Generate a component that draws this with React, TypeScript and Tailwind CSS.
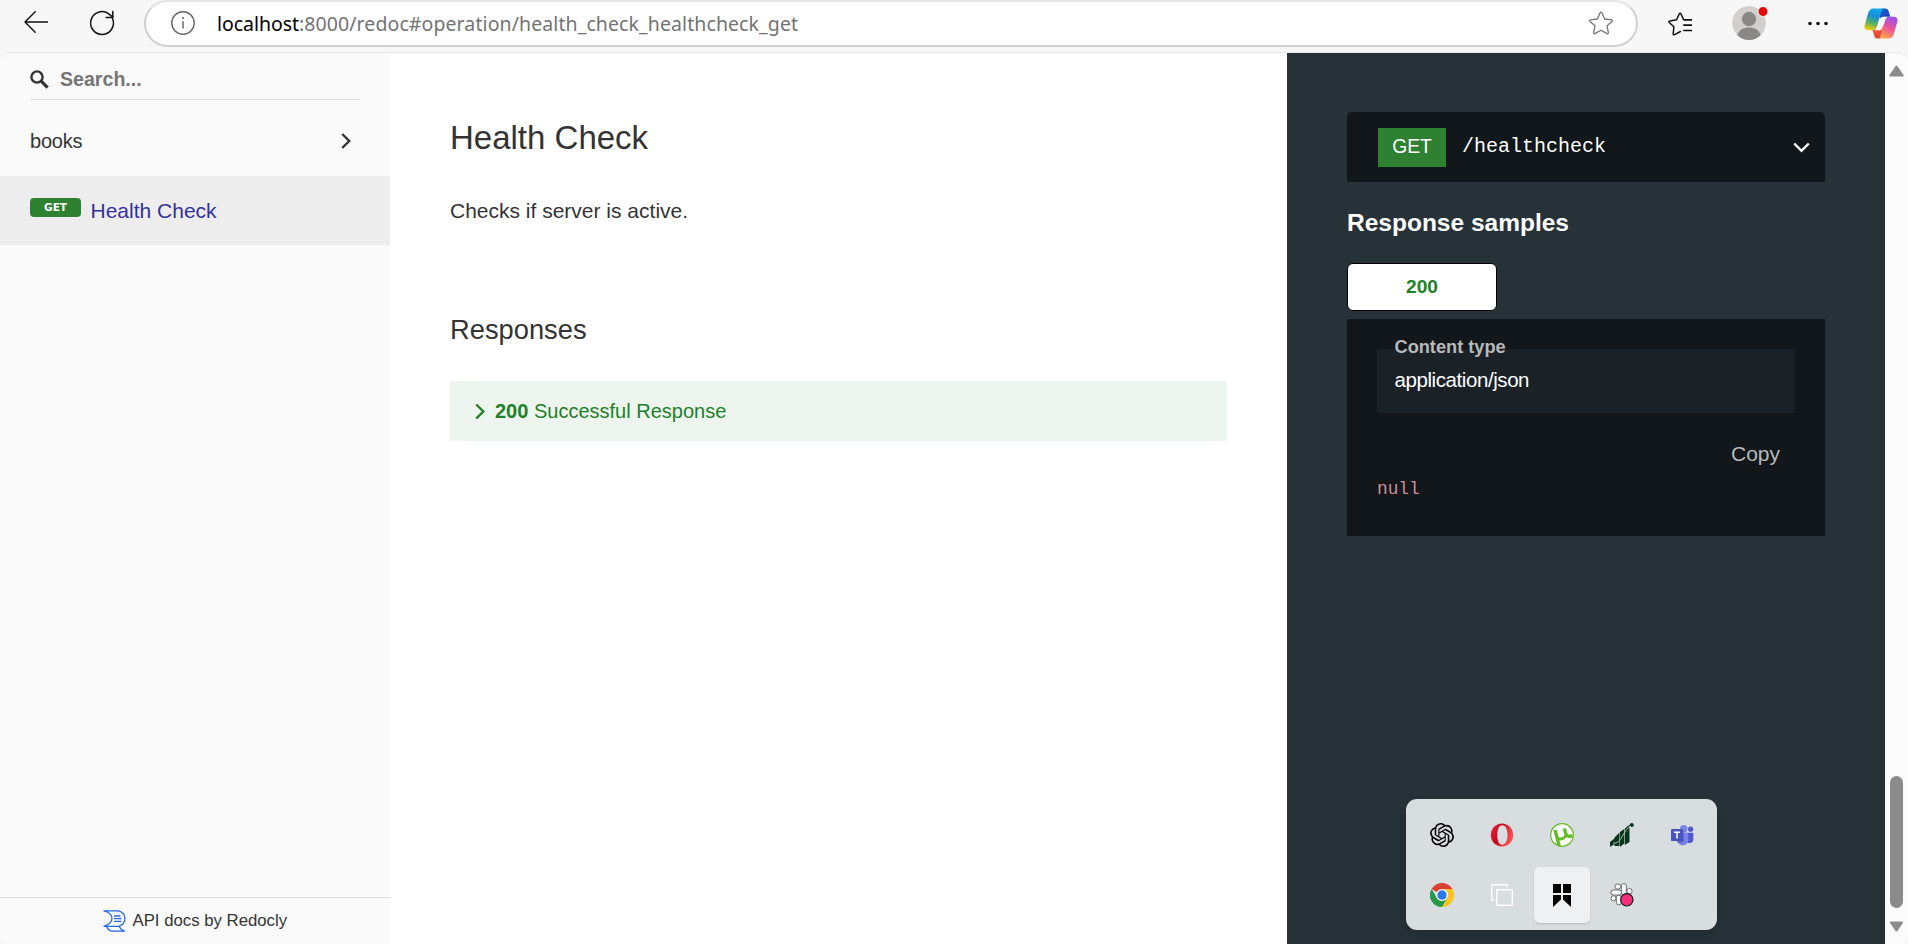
import React from 'react';
import { SiOpenai } from 'react-icons/si';

function BackIcon() {
  return (
    <svg className="block h-6 w-6" viewBox="0 0 24 24" fill="none" stroke="#111" strokeWidth="1.4" strokeLinecap="round" strokeLinejoin="round">
      <path d="M24 12H1M11.2 1.8 1 12l10.2 10.2" />
    </svg>
  );
}

function ReloadIcon() {
  return (
    <svg className="block h-7 w-7" viewBox="0 0 28 28" fill="none" stroke="#111" strokeWidth="1.5" strokeLinecap="round" strokeLinejoin="round">
      <path d="M24.6 9.8A11.4 11.4 0 1 1 20.8 4.9l4 3.2" />
      <path d="M24.8 2.6v6h-6.6" />
    </svg>
  );
}

function InfoIcon() {
  return (
    <svg className="block h-6 w-6" viewBox="0 0 24 24" fill="none" stroke="#666" strokeWidth="1.4">
      <circle cx="12" cy="12" r="11.2" />
      <path d="M12 10.2v7.2" strokeWidth="1.5" />
      <circle cx="12" cy="7" r="1.1" fill="#666" stroke="none" />
    </svg>
  );
}

function StarIcon() {
  return (
    <svg className="block h-6 w-6" viewBox="0 0 24 24" fill="none" stroke="#767676" strokeWidth="1.3" strokeLinejoin="round">
      <path d="M12 1.2c.5 0 .8.3 1 .8l2.6 6 6.9.8c.9.1 1.2 1 .6 1.6l-5.1 4.4 1.4 6.7c.2 1-.7 1.5-1.4 1.1L12 19.2l-6 3.4c-.7.4-1.6-.1-1.4-1.1L6 14.8.9 10.4c-.6-.6-.3-1.5.6-1.6l6.9-.8L11 2c.2-.5.5-.8 1-.8z" />
    </svg>
  );
}

function FavoritesIcon() {
  return (
    <svg className="block h-6 w-6" viewBox="0 0 24 24" fill="none" stroke="#111" strokeWidth="1.5" strokeLinecap="round" strokeLinejoin="round">
      <path d="M15.6 7.6 13 2c-.4-.9-1.4-.9-1.8 0L8.6 7.8 1.8 9c-.9.1-1.2.9-.6 1.5l4.7 4.2-.7 7.2c0 .8.7 1.2 1.4.8L12.400 19.500" />
      <path d="M15.800 7.900H24M15.200 13.200H24M15.200 18.500H24" strokeLinecap="butt" strokeWidth="1.700" />
    </svg>
  );
}

function ProfileIcon() {
  return (
    <svg className="block h-9 w-9" viewBox="0 0 36 36">
      <defs>
        <clipPath id="avatar"><circle cx="17" cy="18" r="17" /></clipPath>
      </defs>
      <g clipPath="url(#avatar)">
        <circle cx="17" cy="18" r="17" fill="#d2d0ce" />
        <circle cx="17" cy="14" r="7.200" fill="#8a8886" />
        <path d="M5 31c2-6.500 6.500-8.500 12-8.500S27 24.500 29 31v5H5z" fill="#8a8886" />
      </g>
      <circle cx="31" cy="6.500" r="5" fill="#e30b0b" stroke="#f7f7f7" strokeWidth="1" />
    </svg>
  );
}

function CopilotIcon() {
  return (
    <svg className="block h-[31px] w-[34px]" viewBox="0 0 34 31">
      <defs>
        <linearGradient id="cpA" x1="0.6" y1="0" x2="0.3" y2="1">
          <stop offset="0" stopColor="#16a9ee" />
          <stop offset="0.35" stopColor="#1391d8" />
          <stop offset="0.65" stopColor="#4fae6a" />
          <stop offset="1" stopColor="#f3cb10" />
        </linearGradient>
        <linearGradient id="cpB" x1="0.7" y1="0" x2="0.3" y2="1">
          <stop offset="0" stopColor="#9a4df0" />
          <stop offset="0.5" stopColor="#ee5593" />
          <stop offset="1" stopColor="#fda94c" />
        </linearGradient>
        <linearGradient id="cpC" x1="0" y1="0" x2="1" y2="1">
          <stop offset="0" stopColor="#0f6fd0" />
          <stop offset="1" stopColor="#2135b5" />
        </linearGradient>
        <linearGradient id="cpD" x1="0" y1="0" x2="0" y2="1">
          <stop offset="0" stopColor="#f9703a" />
          <stop offset="1" stopColor="#e2403a" />
        </linearGradient>
      </defs>
      <path d="M17.5.5h3.800c1.700 0 2.800 1 3.300 2.700l1.800 5.600h-4.600c-2 0-3.200.9-3.800 2.600L14.500 8z" fill="url(#cpC)" />
      <path d="M8.500 22h6.800l3.600-6.500 1.600 6-4 9h-3.100c-1.700 0-2.700-1-3.200-2.700z" fill="url(#cpD)" />
      <path d="M9.500.5h11.300c-1.700 0-2.800 1.100-3.400 2.900L13 18.300c-.8 2.500-2 4-4.500 4H4.200C1.300 22.300-.1 20 .7 17L4.400 4.500C5.300 1.700 6.800.5 9.500.5z" fill="url(#cpA)" />
      <path d="M24.500 30.500H13.200c1.700 0 2.800-1.100 3.400-2.900L21 12.700c.8-2.500 2-4 4.500-4h4.300c2.900 0 4.300 2.300 3.500 5.300l-3.700 12.500c-.9 2.800-2.400 4-5.100 4z" fill="url(#cpB)" />
      <path d="M19.300 8.800h3.500c-1.300.8-1.800 2.200-2.200 3.600l-2.300 7.600c-.5 1.500-1.400 2.200-3 2.200h-3.600c1.200-.8 1.700-2 2.200-3.600l2.300-7.400c.5-1.600 1.500-2.400 3.100-2.400z" fill="#fff" />
    </svg>
  );
}

function BrowserBar() {
  return (
    <header className="flex h-[52px] shrink-0 items-start">
      <div className="ml-6 mt-[10px]"><BackIcon /></div>
      <div className="ml-10 mt-[9px]"><ReloadIcon /></div>
      <div className="ml-7 flex h-[47px] w-[1494px] items-center rounded-full border-2 border-[#d0d0d0] border-t-[#e4e4e4] bg-white pb-px pl-[25px] pr-[23px]">
        <InfoIcon />
        <p className="ml-[22px] mt-px flex-1 whitespace-nowrap font-['Noto_Sans','Open_Sans',sans-serif] text-[19.5px] leading-[28px] tracking-[0.090px] text-[#737373]">
          <span className="tracking-[-0.050px] text-black">localhost</span>:8000/redoc#operation/health_check_healthcheck_get
        </p>
        <StarIcon />
      </div>
      <div className="ml-[30px] mt-3"><FavoritesIcon /></div>
      <div className="ml-10 mt-[5px]"><ProfileIcon /></div>
      <svg className="ml-10 mt-[21px] block h-[5px] w-5" viewBox="0 0 20 5" fill="#111">
        <circle cx="2" cy="2.5" r="1.8" /><circle cx="10" cy="2.5" r="1.8" /><circle cx="18" cy="2.5" r="1.8" />
      </svg>
      <div className="ml-9 mt-[7.5px]"><CopilotIcon /></div>
    </header>
  );
}

function RedoclyLogo() {
  return (
    <svg className="block h-[22px] w-[23px]" viewBox="0 0 23 22" fill="none" stroke="#2467e6" strokeWidth="1.3" strokeLinejoin="round">
      <path d="M.5.8H15.5C24 3 24 13.500 16 16.300H1C7 14 9 11.500 9 8.500S6.500 1.800.5.800" />
      <path d="M3.500 16.500C5 19 6 21.200 9 21.200H21.500C18 20 17 18.500 16 16.300" />
      <path d="M11 6h6.500M11 8.700h7.500M11 11.400h7.500" />
    </svg>
  );
}

function Sidebar() {
  return (
    <aside className="flex w-[390px] shrink-0 flex-col bg-[#fafafa]">
      <div className="mx-[30px] flex h-[47px] items-start border-b border-[#dcdcdc]">
        <svg className="mt-[17px] block h-[19px] w-[19px]" viewBox="0 0 19 19" fill="none" stroke="#333">
          <circle cx="7" cy="7" r="5.6" strokeWidth="2.4" />
          <path d="m11.200 11.200 6.400 6.400" strokeWidth="3.2" />
        </svg>
        <span className="ml-[11px] mt-[12px] text-[19.6px] font-bold leading-[28px] text-[#757575]">Search...</span>
      </div>
      <div className="mt-[27px] flex h-[28px] items-center justify-between pl-[30px] pr-[39px]">
        <span className="text-[20px] leading-[28px] tracking-[-0.200px] text-[#333]">books</span>
        <svg className="block h-4 w-[10px]" viewBox="0 0 10 16" fill="none" stroke="#333" strokeWidth="2.4">
          <path d="m1.200 1 7 7-7 7" />
        </svg>
      </div>
      <div className="mt-[21px] flex h-[69px] items-start bg-[#ededed] pl-[30px]">
        <span className="mt-[22px] h-[19px] w-[51px] rounded-[4px] bg-[#2f8132] text-center font-['DejaVu_Sans',sans-serif] text-[10.5px] font-bold leading-[19px] text-white">GET</span>
        <span className="ml-[9.5px] mt-[21px] text-[21px] leading-[28px] text-[#32329f]">Health Check</span>
      </div>
      <div className="mt-auto flex h-[47px] items-start border-t border-[#dedede] pl-[103px]">
        <div className="mt-[12px]"><RedoclyLogo /></div>
        <span className="ml-[6.5px] mt-[11px] text-[16.75px] leading-[24px] text-[#333]">API docs by Redocly</span>
      </div>
    </aside>
  );
}

function Content() {
  return (
    <main className="flex w-[897px] shrink-0 flex-col bg-white pl-[60px] pr-[60px] text-[#333]">
      <h1 className="mt-[65px] text-[33px] leading-[40px]">Health Check</h1>
      <p className="mt-[39px] text-[21px] leading-[28px]">Checks if server is active.</p>
      <h2 className="mt-[89px] text-[27.3px] leading-[32px]">Responses</h2>
      <button className="mt-[35px] flex h-[60px] items-center rounded-[2px] bg-[#eef5ef] pl-[25px] text-left text-[20px] text-[#1d8127]">
        <svg className="block h-[17px] w-[11px]" viewBox="0 0 11 17" fill="none" stroke="#1d8127" strokeWidth="2.4">
          <path d="m1.300 1.500 7 7-7 7" />
        </svg>
        <span className="ml-[9px]"><strong>200</strong> Successful Response</span>
      </button>
    </main>
  );
}

function SamplesPanel() {
  return (
    <section className="flex w-[598px] shrink-0 flex-col bg-[#263238] px-[60px]">
      <div className="mt-[59px] flex h-[70px] items-start rounded-t-[5px] bg-[#11171a] pl-[31px] pr-[15px]">
        <span className="mt-4 h-[39px] w-[68px] bg-[#2f8132] text-center text-[19.3px] leading-[37px] text-white">GET</span>
        <span className="ml-4 mt-[21px] flex-1 font-['Courier_New','Liberation_Mono',monospace] text-[20px] leading-[28px] text-white">/healthcheck</span>
        <svg className="mt-[30px] block h-[11px] w-[17px]" viewBox="0 0 17 11" fill="none" stroke="#fff" strokeWidth="2.4">
          <path d="m1.200 1.500 7.300 7.300 7.300-7.300" />
        </svg>
      </div>
      <h3 className="mt-[25px] text-[24.5px] font-bold leading-[32px] text-white">Response samples</h3>
      <div className="mt-6 h-12 w-[150px] rounded-[6px] border border-black bg-white text-center text-[19.2px] font-bold leading-[45px] text-[#1d8127]">200</div>
      <div className="mt-2 flex h-[217px] flex-col bg-[#11171a] px-[30px]">
        <div className="mt-[30px] flex h-16 flex-col bg-[#1a2127] pl-[17.5px]">
          <span className="-mt-[12px] text-[18.2px] font-bold leading-[20px] text-[#b8b9ba]">Content type</span>
          <span className="mt-[9px] text-[20.5px] leading-[28px] tracking-[-0.420px] text-white">application/json</span>
        </div>
        <span className="mt-[27px] self-end pr-[15px] text-[21px] leading-[28px] text-[#b8b9ba]">Copy</span>
        <code className="mt-[8px] font-['Liberation_Mono',monospace] text-[17.8px] leading-[27px] text-[#ce8d95]">null</code>
      </div>
    </section>
  );
}

function ScrollRail() {
  return (
    <div className="flex flex-1 flex-col items-center bg-[#fcfcfc]">
      <svg className="mt-3 block h-3 w-[15px]" viewBox="0 0 15 12" fill="#8b8b8b" stroke="#8b8b8b" strokeWidth="2" strokeLinejoin="round">
        <path d="M7.500 1.500 1.300 10.500h12.400z" />
      </svg>
      <div className="mt-auto h-[132px] w-[13px] rounded-full bg-[#8b8b8b]" />
      <svg className="mb-3 mt-[13px] block h-[11px] w-[15px]" viewBox="0 0 15 12" fill="#8b8b8b" stroke="#8b8b8b" strokeWidth="2" strokeLinejoin="round">
        <path d="M7.500 10.500 1.300 1.500h12.400z" />
      </svg>
    </div>
  );
}

function OperaIcon() {
  return (
    <svg className="h-6 w-6" viewBox="0 0 24 24">
      <defs>
        <linearGradient id="op" x1="0" y1="0" x2="1" y2="0.4">
          <stop offset="0" stopColor="#ff2038" /><stop offset="0.45" stopColor="#c10d20" /><stop offset="1" stopColor="#ff4d4d" />
        </linearGradient>
      </defs>
      <path fillRule="evenodd" fill="url(#op)" d="M12 .5c6.300 0 11.200 5.100 11.200 11.500S18.300 23.500 12 23.500.8 18.400.8 12 5.700.5 12 .5zm.2 1.800c-3.200 0-4.900 4.200-4.900 9.700s1.700 9.700 4.900 9.700S17.600 17.500 17.600 12 15.400 2.300 12.200 2.300z" />
    </svg>
  );
}

function UtorrentIcon() {
  return (
    <svg className="h-6 w-6" viewBox="0 0 24 24" fill="none">
      <defs>
        <clipPath id="ut"><circle cx="12" cy="12" r="11.8" /></clipPath>
      </defs>
      <circle cx="12" cy="12" r="11.3" fill="#fff" stroke="#63bb26" strokeWidth="1.2" />
      <g clipPath="url(#ut)" stroke="#63bb26" strokeWidth="3.4">
        <path d="M5 6.800 9.400 24" />
        <path d="M7.500 15.200c3.500 1.800 7 .3 8.200-2.700" strokeWidth="2.800" />
        <path d="M14.300 5.500l1.500 5.300c.6 2.300 2.800 3.200 6.700 1.800" />
      </g>
    </svg>
  );
}

function GrowthIcon() {
  return (
    <svg className="h-6 w-6" viewBox="0 0 24 24">
      <g fill="#06351b">
        <path d="M0 19 4.500 15.500V21L0 24zM4.500 14.500 9.500 9.500V23H4.500zM10 9 14.200 6v14.500L10 24zM14.800 5.500 19.500 3.800V19L14.800 22z" />
        <circle cx="21.800" cy="2" r="2" />
      </g>
      <path d="M3 20C9 21 11 15 13 12s4-7 8-9" fill="none" stroke="#d8dde0" strokeWidth=".8" />
      <path d="M16 5.500c2-2.500 4-3.500 6-3.500" fill="none" stroke="#06351b" strokeWidth="1.2" />
    </svg>
  );
}

function TeamsIcon() {
  return (
    <svg className="h-6 w-6" viewBox="0 0 24 24">
      <circle cx="20.6" cy="6.2" r="2.6" fill="#5059c9" />
      <path d="M16 9.800h7.300v6.800c0 2-1.500 3.400-3.500 3.400H16z" fill="#5059c9" />
      <circle cx="13.8" cy="5.700" r="3.700" fill="#7b83eb" />
      <path d="M7.800 9.800h10.500v7.500a5.500 5.500 0 0 1-10.500 1.800z" fill="#7b83eb" />
      <path d="M7 8h6.800v11.500H7z" fill="#3c4596" opacity=".55" />
      <rect x="1" y="6" width="12" height="12" rx=".8" fill="#4b53bc" />
      <path d="M4 9.200h6M7 9.200v6.300" stroke="#fff" strokeWidth="1.500" />
    </svg>
  );
}

function ChromeIcon() {
  return (
    <svg className="h-6 w-6" viewBox="0 0 24 24">
      <path d="M12 12 1.600 6A12 12 0 0 1 22.400 6z" fill="#dd3f33" />
      <path d="M12 6h10.400A12 12 0 0 1 12 24l5.200-9z" fill="#fcc31e" />
      <path d="M1.600 6A12 12 0 0 0 12 24l5.200-9-5.200 1-5.200-1z" fill="#279847" />
      <circle cx="12" cy="12" r="6" fill="#fff" />
      <circle cx="12" cy="12" r="4.700" fill="#2a79e8" />
    </svg>
  );
}

function WindowsIcon() {
  return (
    <svg className="h-6 w-6" viewBox="0 0 24 24" fill="none" stroke="#fff" strokeWidth="1.4">
      <path d="M17.200 4V1.700H1.700v15.500H4" />
      <rect x="6.700" y="6.700" width="15.600" height="15.600" />
    </svg>
  );
}

function RibbonIcon() {
  return (
    <svg className="h-6 w-6" viewBox="0 0 24 24">
      <path d="M3 1h8v9H3zM13 1h8v9h-8zM3 12h8v4.500L3 24zM13 12h8v12l-8-7.500z" fill="#000" />
    </svg>
  );
}

function SlackIcon() {
  return (
    <svg className="h-6 w-6" viewBox="0 0 24 24">
      <g fill="#fff" stroke="#6b6b6b" strokeWidth="1">
        <rect x="5" y="1" width="5.500" height="5" rx="2.300" />
        <rect x="17" y="5.500" width="5" height="5.500" rx="2.300" />
        <rect x="1" y="12.800" width="5" height="5" rx="2.300" />
        <rect x="1" y="7" width="10.500" height="5" rx="2.300" />
        <rect x="11.300" y=".6" width="5" height="11" rx="2.300" />
        <rect x="12" y="12" width="10" height="5" rx="2.300" />
        <rect x="6.300" y="12.300" width="5" height="9.500" rx="2.300" />
      </g>
      <circle cx="16.800" cy="16.800" r="6.200" fill="#f72f79" stroke="#1a1a1a" strokeWidth="1.200" />
    </svg>
  );
}

const cell = 'flex h-14 w-14 items-center justify-center';

function TrayFlyout() {
  return (
    <div className="absolute left-[1406px] top-[799px] grid h-[131px] w-[311px] grid-cols-[repeat(5,56px)] content-start gap-1 rounded-[11px] bg-[#d8dde0] pl-2 pt-2 shadow-[0_4px_12px_rgba(0,0,0,0.15)]">
      <div className={cell}><SiOpenai className="h-6 w-6 text-black" /></div>
      <div className={cell}><OperaIcon /></div>
      <div className={cell}><UtorrentIcon /></div>
      <div className={cell}><GrowthIcon /></div>
      <div className={cell}><TeamsIcon /></div>
      <div className={cell}><ChromeIcon /></div>
      <div className={cell}><WindowsIcon /></div>
      <div className={cell + ' rounded-[5px] bg-[#eef0f1] shadow-[0_1px_2px_rgba(0,0,0,0.15)]'}><RibbonIcon /></div>
      <div className={cell}><SlackIcon /></div>
    </div>
  );
}

export default function App() {
  return (
    <div className="relative flex h-[944px] w-[1908px] flex-col overflow-hidden bg-[#f7f7f7] font-['Liberation_Sans',Arial,sans-serif]">
      <BrowserBar />
      <div className="flex h-[892px] overflow-hidden rounded-[11px] border-t border-[#e6e6e6] bg-white">
        <Sidebar />
        <Content />
        <SamplesPanel />
        <ScrollRail />
      </div>
      <TrayFlyout />
    </div>
  );
}
